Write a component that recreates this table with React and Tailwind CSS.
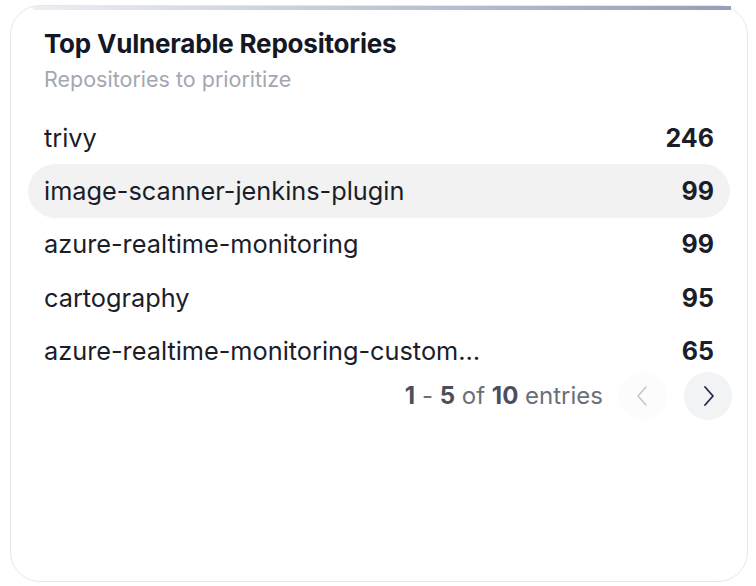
import React from "react";

const rows = [
  { name: "trivy", count: 246 },
  { name: "image-scanner-jenkins-plugin", count: 99, active: true },
  { name: "azure-realtime-monitoring", count: 99 },
  { name: "cartography", count: 95 },
  { name: "azure-realtime-monitoring-customer-dashboard", count: 65 },
];

export default function App() {
  return (
    <div className="w-[756px] h-[586px] bg-white pt-[5px] pl-[10px] pr-[8px] pb-[4px]" style={{ fontFamily: "Inter, 'Noto Sans', sans-serif" }}>
      <div className="relative h-full rounded-[30px] border border-[#e5e7eb] bg-white flex flex-col">
        <div className="absolute top-0 left-[22px] right-[16px] h-[4px] bg-gradient-to-r from-[#eceef2] to-[#94a0b8]" />
        <div className="pl-[33px] pr-[32px] pt-[21px]">
          <h2 className="text-[26px] font-bold text-[#151824] leading-[34px] tracking-[-0.2px]">Top Vulnerable Repositories</h2>
          <p className="text-[21.5px] text-[#a3a7b1] leading-[30px] mt-[3px]">Repositories to prioritize</p>
        </div>
        <div className="flex flex-col px-[17px] mt-[17px]">
          {rows.map((r) => (
            <div
              key={r.name}
              className={`flex items-center justify-between h-[53.3px] rounded-[27px] pl-[16px] pr-[16px] ${r.active ? "bg-[#f2f2f3]" : ""}`}
            >
              <span className="text-[25.3px] text-[#1b1d29] truncate max-w-[437px] leading-[32px]">{r.name}</span>
              <span className="text-[25px] font-bold text-[#1b1d29] leading-[32px]">{r.count}</span>
            </div>
          ))}
        </div>
        <div className="flex items-center justify-end pr-[15px] mt-[-5px]">
          <span className="text-[24px] text-[#6b6f7a] mr-[16px] leading-[32px]">
            <span className="font-bold text-[#4b4f5c]">1</span> - <span className="font-bold text-[#4b4f5c]">5</span> of <span className="font-bold text-[#4b4f5c]">10</span> entries
          </span>
          <button className="w-[48px] h-[48px] rounded-full bg-[#fcfcfc] flex items-center justify-center mr-[17px]">
            <svg width="24" height="24" viewBox="0 0 24 24" fill="none" stroke="#c4c7cf" strokeWidth="1.6" strokeLinecap="round" strokeLinejoin="round"><path d="M15 3l-8 9 8 9" /></svg>
          </button>
          <button className="w-[48px] h-[48px] rounded-full bg-[#f2f3f5] flex items-center justify-center">
            <svg width="24" height="24" viewBox="0 0 24 24" fill="none" stroke="#1e2a44" strokeWidth="1.8" strokeLinecap="round" strokeLinejoin="round"><path d="M9 3l8 9-8 9" /></svg>
          </button>
        </div>
      </div>
    </div>
  );
}
